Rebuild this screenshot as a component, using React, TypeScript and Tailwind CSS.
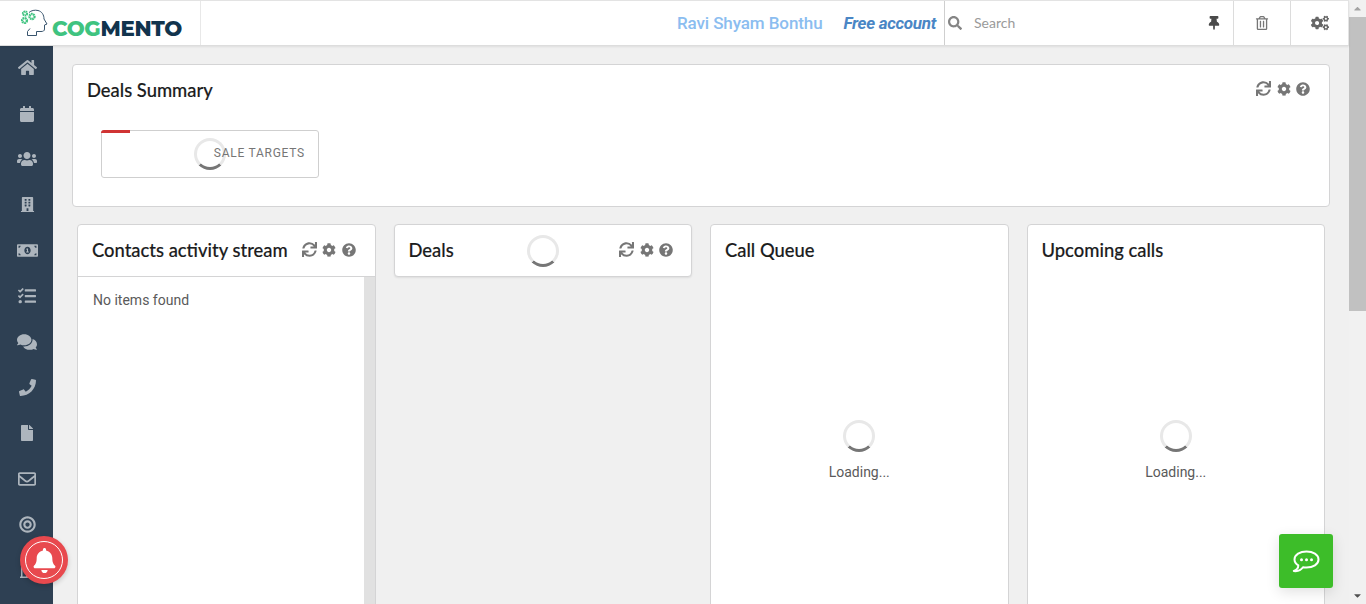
import {
  FaBell,
  FaBuilding,
  FaBullseye,
  FaCalendar,
  FaCaretDown,
  FaCaretUp,
  FaCog,
  FaCogs,
  FaComments,
  FaFile,
  FaHome,
  FaMoneyBillAlt,
  FaPhone,
  FaQuestionCircle,
  FaRegBuilding,
  FaRegEnvelope,
  FaRegTrashAlt,
  FaSearch,
  FaSync,
  FaTasks,
  FaThumbtack,
  FaUsers,
} from "react-icons/fa";

const navIcons = [
  { icon: FaHome, size: 19 },
  { icon: FaCalendar, size: 16 },
  { icon: FaUsers, size: 20 },
  { icon: FaBuilding, size: 15 },
  { icon: FaMoneyBillAlt, size: 21 },
  { icon: FaTasks, size: 18 },
  { icon: FaComments, size: 20 },
  { icon: FaPhone, size: 17 },
  { icon: FaFile, size: 16 },
  { icon: FaRegEnvelope, size: 18 },
  { icon: FaBullseye, size: 17 },
  { icon: FaRegBuilding, size: 16 },
];

function Logo() {
  return (
    <div className="flex items-start pt-[8px] pl-[21px]">
      <svg width="28" height="28" viewBox="0 0 28 28" fill="none">
        <path
          d="M8 3.500C10 1.500 14 0.700 17 1.500C21 2.500 23 6 23 10L26 15L23.500 16V20C23.500 22 22 22.500 20 22.500H15.500V26.500H6.500V22.500L9 19.500"
          stroke="#38546d"
          strokeWidth="1"
        />
        <circle cx="4" cy="4.500" r="2" stroke="#3fc380" strokeWidth="2.200" strokeDasharray="1.400 0.400" />
        <circle cx="11" cy="7.500" r="2.500" stroke="#3fc380" strokeWidth="2.400" strokeDasharray="1.600 0.500" />
        <circle cx="3.500" cy="11.500" r="2.400" stroke="#3fc380" strokeWidth="2.400" strokeDasharray="1.600 0.500" />
      </svg>
      <span className="mt-[9px] ml-[3px] font-['Montserrat','Open_Sans',sans-serif] text-[21.3px] leading-none font-extrabold tracking-[-0.3px]">
        <span className="text-[#3fc380]">COG</span>
        <span className="text-[#12344d]">MENTO</span>
      </span>
    </div>
  );
}

function Spinner({ className = "" }: { className?: string }) {
  return (
    <div
      className={`h-8 w-8 rounded-full border-[3px] border-[#e8e8e8] border-b-[#767676] ${className}`}
    />
  );
}

function CardTools({ className = "" }: { className?: string }) {
  return (
    <div className={`flex items-center gap-[5.500px] text-[#767676] ${className}`}>
      <FaSync size={15} />
      <FaCog size={14} />
      <FaQuestionCircle size={14} />
    </div>
  );
}

function CardTitle({ children }: { children: string }) {
  return (
    <h3 className="font-['Lato',sans-serif] text-[18.4px] leading-none font-medium text-[#1b1c1d] [-webkit-text-stroke:0.15px_#1b1c1d]">
      {children}
    </h3>
  );
}

function LoadingCard({ title }: { title: string }) {
  return (
    <div className="flex h-[420px] flex-col rounded-t border border-[#d4d4d5] bg-white">
      <div className="px-[14px] pt-[16px]">
        <CardTitle>{title}</CardTitle>
      </div>
      <div className="mt-[161px] flex flex-col items-center">
        <Spinner />
        <span className="mt-[13px] text-[14px] leading-none text-[#5a5a5a]">Loading...</span>
      </div>
    </div>
  );
}

export default function App() {
  return (
    <div className="flex h-[604px] w-[1366px] overflow-hidden bg-[#f0f0f0] font-['Roboto',sans-serif]">
      <div className="relative flex min-w-0 flex-1 flex-col">
        <header className="relative z-10 flex h-[45px] shrink-0 items-stretch border-t border-r border-[#e3e3e3] bg-white shadow-[0_1px_0_#dddddd,0_2px_2px_rgba(0,0,0,0.08)]">
          <div className="flex w-[201px] border-r border-[#e8e8e8]">
            <Logo />
          </div>
          <div className="flex flex-1 items-center justify-end gap-[21px] pt-[2px] pr-[8px]">
            <span className="text-[17px] font-medium tracking-[-0.1px] text-[#8bbdf0]">
              Ravi Shyam Bonthu
            </span>
            <span className="text-[17px] font-bold tracking-[-0.3px] text-[#4a86c5] italic">
              Free account
            </span>
          </div>
          <div className="flex w-[289px] items-center border-l border-[#cfcfcf] pr-[12px] pl-[3px]">
            <FaSearch size={14} className="text-[#858585]" />
            <span className="-mt-[2px] ml-[12px] flex-1 font-['Lato',sans-serif] text-[14px] text-[#9a9a9a]">
              Search
            </span>
            <FaThumbtack size={14} className="text-[#4a4a4a]" />
          </div>
          <div className="flex w-[57px] items-center justify-center border-l border-[#dcdcdc] text-[#767676]">
            <FaRegTrashAlt size={14} />
          </div>
          <div className="flex w-[58px] items-center justify-center border-l border-[#dcdcdc] text-[#666]">
            <FaCogs size={18} />
          </div>
        </header>

        <div className="flex min-h-0 flex-1">
          <nav className="flex w-[53px] shrink-0 flex-col items-center bg-[#2e4053] pl-[1px]">
            {navIcons.map(({ icon: Icon, size }, i) => (
              <div key={i} className="flex h-[45.7px] w-full shrink-0 items-center justify-center text-[#adb5bd]">
                <Icon size={size} />
              </div>
            ))}
          </nav>

          <main className="min-w-0 flex-1 px-[19px] pt-[19px]">
            <section className="h-[143px] rounded border border-[#d4d4d5] bg-white px-[14px] pt-[16px]">
              <div className="flex items-start justify-between pr-[5px]">
                <CardTitle>Deals Summary</CardTitle>
                <CardTools />
              </div>
              <div className="relative mt-[31px] ml-[14px] flex h-[48px] w-[218px] items-center justify-end rounded-[3px] border border-[#cfcfcf] pr-[13px]">
                <div className="absolute -top-px -left-px h-[3px] w-[29px] rounded-tl-[3px] bg-[#d03434]" />
                <Spinner className="absolute top-[7px] left-[92px]" />
                <span className="relative -mt-[2px] text-[12px] tracking-[0.75px] text-[#767676]">SALE TARGETS</span>
              </div>
            </section>

            <div className="mt-[17px] grid grid-cols-4 items-start gap-x-[18px] px-[5px]">
              <div className="flex h-[420px] flex-col rounded-t border border-[#d4d4d5] bg-white">
                <div className="flex h-[52px] items-start justify-between border-b border-[#d4d4d5] pt-[16px] pr-[19px] pl-[14px]">
                  <CardTitle>Contacts activity stream</CardTitle>
                  <CardTools className="mt-px" />
                </div>
                <div className="flex flex-1">
                  <div className="flex-1 pt-[16px] pl-[15px] text-[14px] leading-none text-[#5a5a5a]">
                    No items found
                  </div>
                  <div className="w-[11px] bg-[#e1e1e1]" />
                </div>
              </div>

              <div className="relative flex h-[53px] items-start justify-between rounded border border-[#d4d4d5] bg-white pt-[16px] pr-[18px] pl-[14px] shadow-[0_1px_2px_rgba(0,0,0,0.08)]">
                <CardTitle>Deals</CardTitle>
                <Spinner className="absolute top-[10px] left-[132px]" />
                <CardTools className="mt-px" />
              </div>

              <LoadingCard title="Call Queue" />
              <LoadingCard title="Upcoming calls" />
            </div>
          </main>
        </div>

        <div className="absolute top-[536px] left-[20px] z-20 flex h-[48px] w-[48px] items-center justify-center rounded-full bg-[#e8494e] shadow-[0_2px_5px_rgba(0,0,0,0.18)]">
          <div className="flex h-[38px] w-[38px] items-center justify-center rounded-full border-[1.5px] border-white text-white">
            <FaBell size={25} />
          </div>
        </div>

        <div className="absolute top-[534px] left-[1279px] z-20 flex h-[54px] w-[54px] items-center justify-center rounded-[3px] bg-[#3dbd29] shadow-[0_4px_14px_rgba(0,0,0,0.12)]">
          <svg width="28" height="23" viewBox="0 0 28 23" fill="none">
            <path
              d="M14.500 1.500C8 1.500 2.500 4.700 2.500 9.500C2.500 12 4 14 6.300 15.400C6.300 17.500 4.800 19.800 1.800 21C5.500 21.500 9 20.200 11 17.300C12 17.500 13.300 17.600 14.500 17.600C21 17.600 26.500 14.300 26.500 9.500C26.500 4.700 21 1.500 14.500 1.500Z"
              stroke="white"
              strokeWidth="2"
              strokeLinejoin="round"
            />
            <circle cx="9.500" cy="9.700" r="1.500" fill="white" />
            <circle cx="14.500" cy="9.700" r="1.500" fill="white" />
            <circle cx="19.500" cy="9.700" r="1.500" fill="white" />
          </svg>
        </div>
      </div>

      <div className="flex w-[17px] shrink-0 flex-col bg-[#f1f1f1] text-[#a3a3a3]">
        <div className="flex h-[17px] items-center justify-center">
          <FaCaretUp size={11} />
        </div>
        <div className="h-[294px] bg-[#c1c1c1]" />
        <div className="flex-1" />
        <div className="flex h-[17px] items-center justify-center text-[#505050]">
          <FaCaretDown size={11} />
        </div>
      </div>
    </div>
  );
}
